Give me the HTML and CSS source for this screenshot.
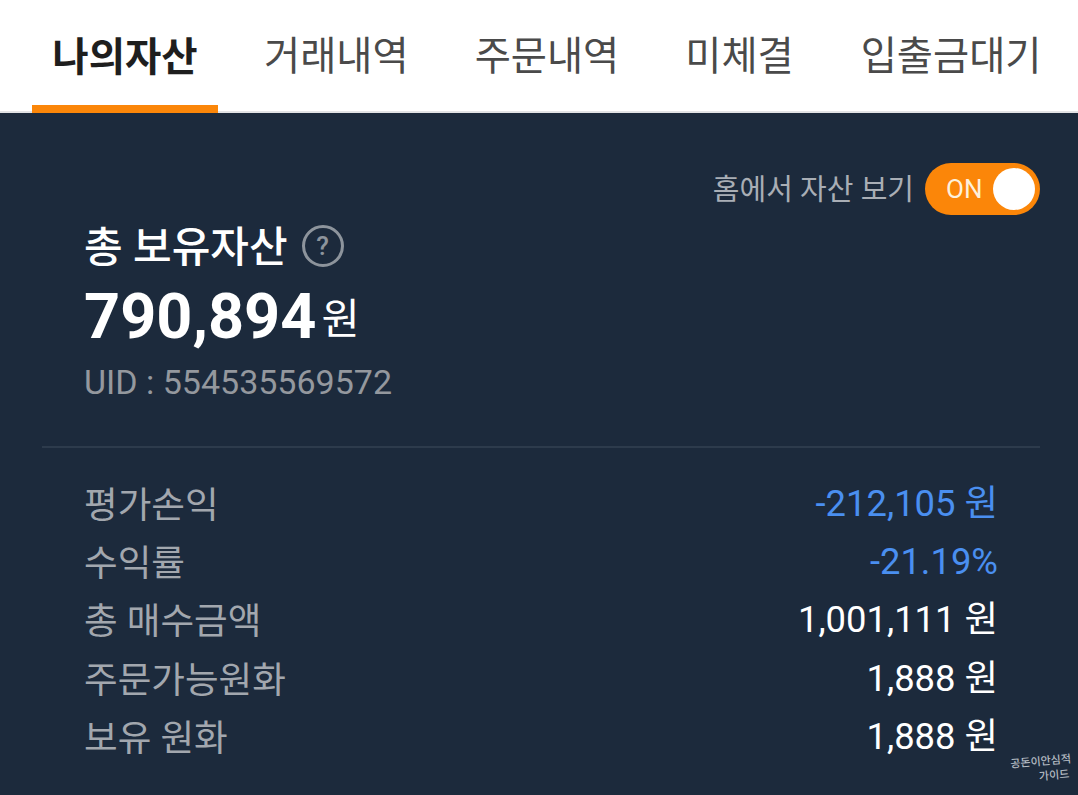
FILE: index.html
```html
<html>
<head>
    <meta charset="UTF-8">
    <title>나의자산</title>
    <link rel="stylesheet" href="styles.css">
</head>
<body>
<div class="tabs">
    <div class="tab active">나의자산</div>
    <div class="tab">거래내역</div>
    <div class="tab">주문내역</div>
    <div class="tab">미체결</div>
    <div class="tab">입출금대기</div>
</div>
<div class="panel">
    <div class="home-toggle">
        <span class="home-label">홈에서 자산 보기</span>
        <div class="switch">
            <span class="switch-text">ON</span>
            <span class="switch-knob"></span>
        </div>
    </div>
    <div class="summary">
        <div class="summary-title">
            <span class="summary-name">총 보유자산</span>
            <span class="help">?</span>
        </div>
        <div class="total"><span class="total-num">790,894</span><span class="total-unit">원</span></div>
        <div class="uid">UID : 554535569572</div>
    </div>
    <div class="rows">
        <div class="row"><span class="row-label">평가손익</span><span class="row-value blue">-212,105 원</span></div>
        <div class="row"><span class="row-label">수익률</span><span class="row-value blue">-21.19%</span></div>
        <div class="row"><span class="row-label">총 매수금액</span><span class="row-value">1,001,111 원</span></div>
        <div class="row"><span class="row-label">주문가능원화</span><span class="row-value">1,888 원</span></div>
        <div class="row"><span class="row-label">보유 원화</span><span class="row-value">1,888 원</span></div>
    </div>
    <div class="watermark"><div>공돈이안심적</div><div class="watermark-low">가이드</div></div>
</div>
</body>
</html>
```

FILE: styles.css
```css
* {
    padding: 0;
    margin: 0;
    box-sizing: border-box;
}

html, body {
    width: 1078px;
    height: 795px;
    overflow: hidden;
}

body {
    font-family: Roboto, "Noto Sans CJK KR", sans-serif;
    background-color: #1c2a3c;
}

.tabs {
    height: 113px;
    background-color: #fff;
    border-bottom: 2px solid #e2e3e5;
    display: flex;
    padding-left: 32px;
}

.tab {
    flex: none;
    height: 113px;
    font-size: 39.3px;
    line-height: 115px;
    color: #4a4a4a;
    margin-right: 66px;
    white-space: nowrap;
}

.tab:nth-child(1) {
    width: 186px;
    margin-right: 46px;
    text-align: center;
}

.tab:nth-child(4) {
    margin-right: 67px;
}

.tab.active {
    font-weight: 700;
    font-size: 39.5px;
    color: #1e1e1e;
    border-bottom: 8px solid #fb8609;
}

.panel {
    position: relative;
    height: 682px;
    background-color: #1c2a3c;
    padding: 50px 38px 0 42px;
}

.home-toggle {
    display: flex;
    justify-content: flex-end;
    align-items: center;
    height: 52px;
}

.home-label {
    font-size: 29px;
    color: #a9aeb5;
    margin-right: 11px;
    margin-bottom: 4px;
}

.switch {
    width: 115px;
    height: 52px;
    border-radius: 26px;
    background-color: #fb8609;
    display: flex;
    align-items: center;
    justify-content: space-between;
    padding: 0 5px 0 21px;
}

.switch-text {
    font-size: 26px;
    color: #fdf0dc;
}

.switch-knob {
    width: 42px;
    height: 42px;
    border-radius: 50%;
    background-color: #fff;
}

.summary {
    padding-left: 42px;
    margin-top: 2px;
    height: 231px;
    border-bottom: 2px solid #2d3b4c;
}

.summary-title {
    display: flex;
    align-items: center;
    font-size: 42px;
    font-weight: 500;
    color: #fff;
    height: 58px;
}

.summary-name {
    margin-bottom: 6px;
}

.help {
    width: 42px;
    height: 42px;
    margin-left: 14px;
    border: 3px solid #8d949c;
    border-radius: 50%;
    color: #8d949c;
    font-size: 26px;
    font-weight: 500;
    line-height: 36px;
    text-align: center;
}

.total {
    height: 78px;
    padding-top: 4px;
    display: flex;
    align-items: center;
    color: #fff;
}

.total-num {
    font-size: 63px;
    font-weight: 700;
}

.total-unit {
    font-size: 41.5px;
    margin-left: 5px;
}

.uid {
    font-size: 34px;
    color: #94989e;
    line-height: 50px;
    padding-top: 4px;
}

.rows {
    padding: 29px 42px 0 42px;
}

.row {
    display: flex;
    justify-content: space-between;
    height: 58.2px;
    line-height: 58px;
}

.row-label {
    font-size: 36.6px;
    color: #a2a7ae;
}

.row-value {
    font-size: 36.4px;
    color: #fff;
    margin-top: -2px;
}

.row-value.blue {
    color: #4a8ff0;
}

.watermark {
    position: absolute;
    right: 6px;
    bottom: 11px;
    font-size: 11px;
    font-weight: 500;
    line-height: 15px;
    color: #b4bbc2;
    text-align: right;
    transform: rotate(-5deg);
}

.watermark-low {
    padding-right: 3px;
}
```
